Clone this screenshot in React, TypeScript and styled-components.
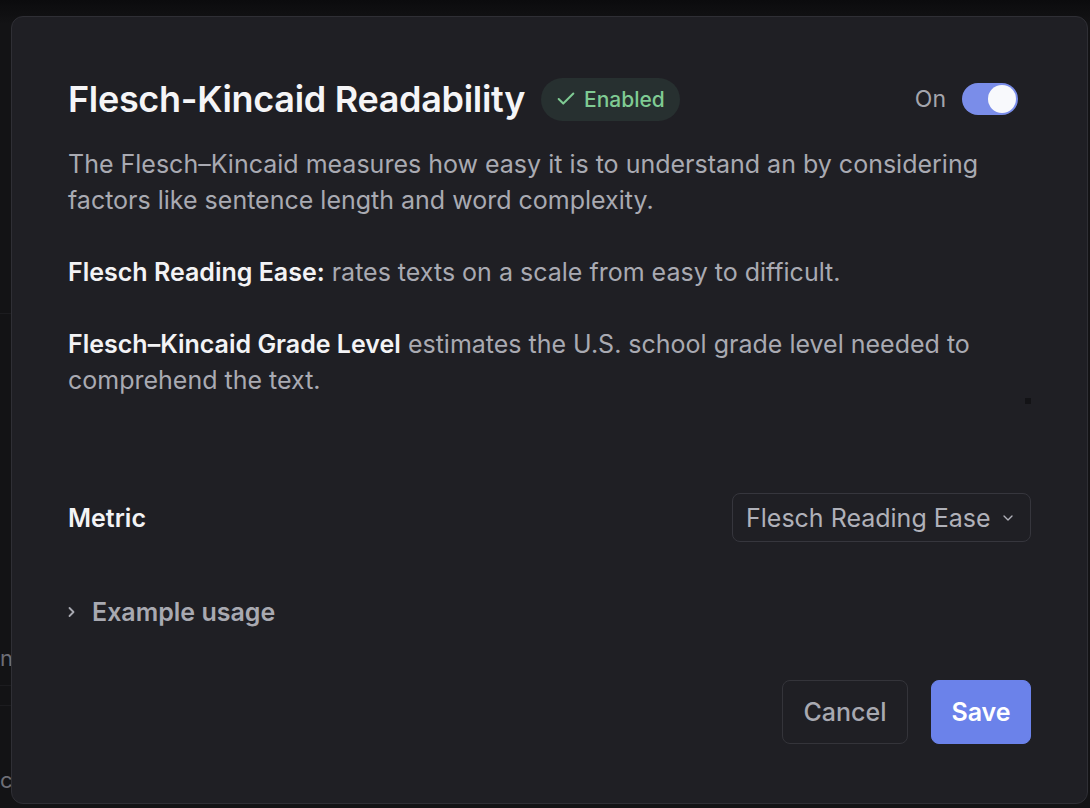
import { useState } from "react";
import styled, { createGlobalStyle } from "styled-components";
import { Check, ChevronDown } from "lucide-react";

const GlobalStyle = createGlobalStyle`
  html, body {
    margin: 0;
    padding: 0;
    background: #121214;
    font-family: Inter, "Noto Sans", sans-serif;
  }
  * { box-sizing: border-box; }
`;

const Page = styled.div`
  width: 1090px;
  height: 808px;
  overflow: hidden;
  display: flex;
  background: linear-gradient(180deg, #0b0b0d 0px, #131315 24px, #131315 100%);
`;

const Behind = styled.div`
  width: 11px;
  flex-shrink: 0;
  display: flex;
  flex-direction: column;
  padding-top: 313px;
  overflow: hidden;
`;

const BehindLine = styled.div<{ $gap: number }>`
  margin-top: ${(p) => p.$gap}px;
  height: 1px;
  background: #1c1c1f;
`;

const BehindText = styled.div<{ $gap: number }>`
  margin-top: ${(p) => p.$gap}px;
  color: #6e6e76;
  font-size: 22px;
  line-height: 27px;
  text-align: right;
  white-space: nowrap;
`;

const Modal = styled.div`
  margin-top: 16px;
  width: 1077px;
  height: 788px;
  background: #1f1f24;
  border: 1px solid #2f2f35;
  border-radius: 12px;
  padding: 60px 56px 59px 56px;
  display: flex;
  flex-direction: column;
  position: relative;
`;

const Header = styled.div`
  display: flex;
  align-items: center;
  gap: 16px;
  margin-right: 13px;
`;

const Title = styled.h1`
  margin: 0;
  font-size: 36px;
  font-weight: 600;
  color: #f5f5f7;
  letter-spacing: -0.32px;
`;

const Badge = styled.span`
  display: inline-flex;
  align-items: center;
  gap: 7px;
  height: 43px;
  padding: 0 15px 0 14px;
  border-radius: 22px;
  background: #273030;
  color: #7fcb93;
  font-size: 21px;
  font-weight: 500;
`;

const Spacer = styled.div`
  flex: 1;
`;

const ToggleLabel = styled.span`
  color: #a4a5ad;
  font-size: 23px;
`;

const Switch = styled.button<{ $on: boolean }>`
  width: 56px;
  height: 32px;
  border-radius: 16px;
  border: none;
  padding: 2px;
  display: flex;
  justify-content: ${(p) => (p.$on ? "flex-end" : "flex-start")};
  background: ${(p) => (p.$on ? "#7a8de9" : "#3a3a40")};
  cursor: pointer;
`;

const Knob = styled.span`
  width: 28px;
  height: 28px;
  border-radius: 50%;
  background: #f8f9fc;
`;

const Description = styled.div`
  margin-top: 25px;
  color: #a9aab2;
  font-size: 25px;
  line-height: 36px;
  p {
    margin: 0 0 36px 0;
  }
  p:last-child {
    margin-bottom: 0;
  }
  strong {
    color: #f3f3f5;
    font-weight: 600;
  }
`;

const Dot = styled.span`
  position: absolute;
  right: 56px;
  top: 381px;
  width: 6px;
  height: 6px;
  background: #131316;
`;

const MetricRow = styled.div`
  margin-top: 95px;
  display: flex;
  align-items: center;
  justify-content: space-between;
`;

const Label = styled.span`
  color: #f3f3f5;
  font-size: 25px;
  font-weight: 600;
`;

const Select = styled.button`
  width: 299px;
  height: 49px;
  display: flex;
  align-items: center;
  justify-content: space-between;
  padding: 0 14px 0 13px;
  background: transparent;
  border: 1px solid #36363d;
  border-radius: 8px;
  color: #b0b1b9;
  font-family: inherit;
  font-size: 25px;
  cursor: pointer;
`;

const Disclosure = styled.button`
  margin-top: 52px;
  align-self: flex-start;
  display: flex;
  align-items: center;
  gap: 17px;
  height: 36px;
  padding: 0;
  background: none;
  border: none;
  color: #a8a9b1;
  font-family: inherit;
  font-size: 25px;
  font-weight: 600;
  cursor: pointer;
`;

const Footer = styled.div`
  margin-top: auto;
  display: flex;
  justify-content: flex-end;
  gap: 23px;
`;

const Button = styled.button<{ $primary?: boolean }>`
  height: 64px;
  width: ${(p) => (p.$primary ? "100px" : "126px")};
  padding: 0;
  border-radius: 8px;
  border: 1px solid ${(p) => (p.$primary ? "#6b82ea" : "#34343a")};
  background: ${(p) => (p.$primary ? "#6b82ea" : "transparent")};
  color: ${(p) => (p.$primary ? "#ffffff" : "#a8a9b1")};
  font-family: inherit;
  font-size: 25px;
  font-weight: ${(p) => (p.$primary ? 600 : 500)};
  cursor: pointer;
`;

const SmallChevron = () => (
  <svg width="7" height="12" viewBox="0 0 7 12" fill="none">
    <polyline points="1.5,2 5.5,6 1.5,10" stroke="currentColor" strokeWidth="1.8" strokeLinecap="round" strokeLinejoin="round" />
  </svg>
);

const App = () => {
  const [on, setOn] = useState(true);

  return (
    <Page>
      <GlobalStyle />
      <Behind>
        <BehindLine $gap={0} />
        <BehindText $gap={331}>n</BehindText>
        <BehindLine $gap={13} />
        <BehindLine $gap={19} />
        <BehindText $gap={61}>c</BehindText>
      </Behind>
      <Modal>
        <Header>
          <Title>Flesch-Kincaid Readability</Title>
          <Badge>
            <Check size={22} strokeWidth={2.2} />
            Enabled
          </Badge>
          <Spacer />
          <ToggleLabel>{on ? "On" : "Off"}</ToggleLabel>
          <Switch $on={on} onClick={() => setOn(!on)}>
            <Knob />
          </Switch>
        </Header>
        <Description>
          <p>
            The Flesch–Kincaid measures how easy it is to understand an by considering
            factors like sentence length and word complexity.
          </p>
          <p>
            <strong>Flesch Reading Ease:</strong> rates texts on a scale from easy to difficult.
          </p>
          <p>
            <strong>Flesch–Kincaid Grade Level</strong> estimates the U.S. school grade level
            needed to comprehend the text.
          </p>
        </Description>
        <Dot />
        <MetricRow>
          <Label>Metric</Label>
          <Select>
            Flesch Reading Ease
            <ChevronDown size={16} strokeWidth={2} />
          </Select>
        </MetricRow>
        <Disclosure>
          <SmallChevron />
          Example usage
        </Disclosure>
        <Footer>
          <Button>Cancel</Button>
          <Button $primary>Save</Button>
        </Footer>
      </Modal>
    </Page>
  );
};

export default App;
